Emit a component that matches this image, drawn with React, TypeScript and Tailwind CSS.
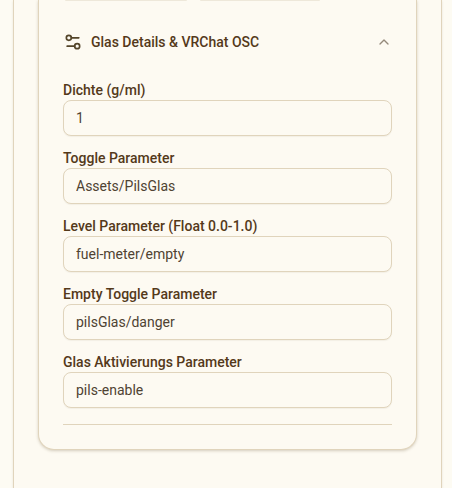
import { ChevronUp, Settings2 } from "lucide-react";

const fields = [
  ["Dichte (g/ml)", "1"],
  ["Toggle Parameter", "Assets/PilsGlas"],
  ["Level Parameter (Float 0.0-1.0)", "fuel-meter/empty"],
  ["Empty Toggle Parameter", "pilsGlas/danger"],
  ["Glas Aktivierungs Parameter", "pils-enable"],
];

export default function App() {
  return (
    <div className="h-[488px] overflow-hidden bg-[#fdfbf3] pr-[10px] pl-[13px] font-['Roboto',sans-serif]">
      <div className="h-full border-x border-[#e0d4bc] bg-[#fdfaf2] px-6 shadow-[0_1px_2px_rgba(90,70,30,0.12)]">
        <div className="rounded-b-2xl border border-t-0 border-[#e0d4bc] bg-[#fdfaf2] px-6 pb-6 shadow-[0_1px_3px_rgba(90,70,30,0.25)]">
          <div className="flex h-px gap-[13px] pl-[2px]">
            <div className="h-full w-[122px] rounded-b bg-[#eee8da]" />
            <div className="h-full w-[120px] rounded-b bg-[#eee8da]" />
          </div>
          <div className="flex h-[79px] items-center justify-between pt-[2px]">
            <div className="flex items-center gap-2">
              <Settings2 className="h-5 w-5 text-[#54452a]" />
              <span className="text-sm font-medium text-[#54391a]">Glas Details &amp; VRChat OSC</span>
            </div>
            <ChevronUp className="h-4 w-4 text-[#94897a]" />
          </div>
          <div className="flex flex-col gap-3 pb-4">
            {fields.map(([label, value]) => (
              <div key={label} className="flex flex-col">
                <label className="text-sm leading-5 font-medium text-[#54391a]">{label}</label>
                <input
                  readOnly
                  value={value}
                  className="h-9 w-full rounded-lg border border-[#e0d4bc] bg-[#fdfaf2] px-3 text-sm text-[#4f4332] shadow-[0_1px_1px_rgba(90,70,30,0.06)] outline-none"
                />
              </div>
            ))}
          </div>
          <div className="h-px bg-[#e0d4bc]" />
        </div>
      </div>
    </div>
  );
}
